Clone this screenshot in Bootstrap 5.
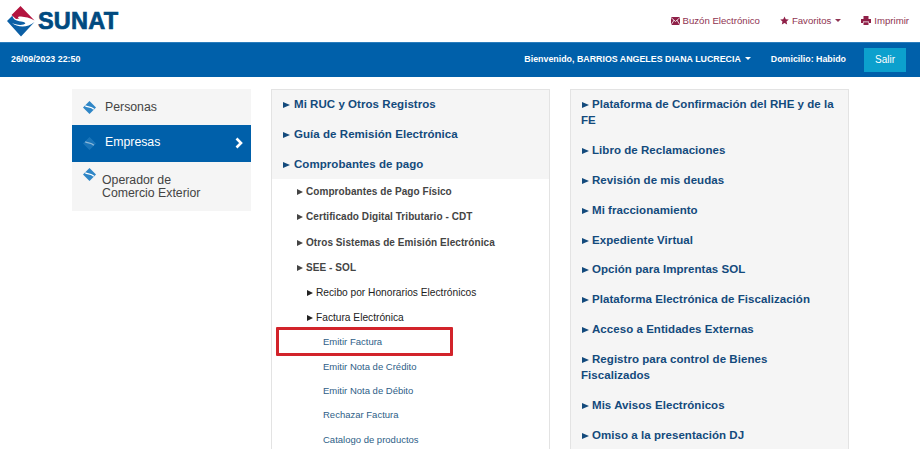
<!doctype html>
<html lang="es">
<head>
<meta charset="utf-8">
<title>SUNAT</title>
<link href="https://cdn.jsdelivr.net/npm/bootstrap@5.3.0/dist/css/bootstrap.min.css" rel="stylesheet">
<style>
html,body{height:461px;overflow:hidden;background:#fff}
body{font-family:"Liberation Sans",Arial,sans-serif;color:#333}
.top-head{height:42px;padding:0 11px 0 7px}
.logo-word{font-weight:700;font-size:23.5px;line-height:1;color:#004a80;-webkit-text-stroke:.7px #004a80;letter-spacing:.2px;margin-left:3px;margin-top:2px}
.top-link{font-size:9.6px;color:#8f3452;text-decoration:none;margin-left:20px;line-height:1}
.top-link svg{vertical-align:-1px;margin-right:3px}
.caret-dn{display:inline-block;width:0;height:0;border-left:3px solid transparent;border-right:3px solid transparent;border-top:3px solid currentColor;vertical-align:2px;margin-left:4px}
.info-bar{height:35px;background:#0060aa;border-top:1px solid #2a7dbd;color:#fff;font-weight:700;font-size:8.85px;padding:0 14px 0 11px}
.domi{margin-left:20px}
.btn-exit{background:#0ca0cd;color:#fff;font-size:10px;width:42px;height:24px;padding:0;border:0;border-radius:0;line-height:24px;margin-left:18px;font-weight:400}
.btn-exit:hover{background:#0ca0cd;color:#fff}
.main-clip{height:372px;overflow:hidden;padding-top:12px}
.main-cols{display:flex;padding-left:72px;gap:20px;align-items:flex-start}
.side-col{width:179px;background:#f5f5f5;font-size:12.3px;color:#444}
.side-row{height:36px;padding-left:11px;gap:5px}
.side-row.row-active{height:37px;background:#0060aa;color:#fff;padding-right:7px}
.side-row.row-active .side-txt{margin-top:-2px}
.side-chev{margin-top:-2px}
.side-row.row-tall{height:49px;align-items:flex-start}
.side-row.row-tall .side-txt{line-height:13px;margin-left:1px;margin-top:12px}
.side-row.row-tall svg{margin-top:6px}
.menu-col{width:279px;height:420px;border:1px solid #e3e3e3;background:#fff}
.menu-col.col-grey{background:#f5f5f5}
.tree-head{font-weight:700;font-size:11.5px;line-height:16px;color:#134a7c;letter-spacing:.05px}
.grey-band{background:#f5f5f5;padding:6px 11px 7px 11px}
.grey-band .tree-head{padding:0 0 14px 0}
.grey-band .tree-head:last-child{padding-bottom:0}
.col-grey .tree-head{padding:0 10px 13.9px 10px}
.col-grey .tree-head:first-child{padding-top:6px}
.tri{display:inline-block;width:0;height:0;border-top:3.5px solid transparent;border-bottom:3.5px solid transparent;border-left:7px solid currentColor;margin-right:4px;vertical-align:0}
.col-grey .tri{margin-left:1px;margin-right:3px}
.tree-sub{font-weight:700;font-size:10px;line-height:14px;color:#444;padding:0 0 11.3px 25px;letter-spacing:.07px}
.tree-sub .tri,.tree-leaf .tri{border-left-width:6px;margin-right:3px}
.tree-leaf{font-size:10.2px;line-height:14px;color:#222;padding:0 0 11px 35px}
.tree-link{display:block;font-size:9.5px;line-height:14px;color:#2e6087;padding:0 0 10.35px 51px;text-decoration:none;position:relative}
.first-link{margin-top:-1px}
.sub-list{padding-top:6px}
.mark-box{position:absolute;left:4px;top:-8px;width:177px;height:29px;border:3px solid #d2232a;border-radius:1px}
</style>
</head>
<body>
<svg width="0" height="0" class="position-absolute">
<symbol id="dia" viewBox="0 0 30 30">
<path d="M15 0 30 15 15 30 0 15Z" fill="#2f86c6"/>
<path d="M5 11C11 15 18 12 25 19" fill="none" stroke="#fff" stroke-width="3.2"/>
</symbol>
</svg>
<header class="top-head d-flex align-items-center">
<svg width="28" height="31" viewBox="0 0 28 31" class="flex-shrink-0"><path d="M13.500 0 27.500 14.500C23 11.500 18 11 14 10.500 11 10 10 11.500 12.500 12.500L9 13 4.500 9Z" fill="#b3143f"/><path d="M0 15 5.500 9.500C5.500 13 9 15 14 15.500 18 16 20 17.500 16.500 18.500 13 19.500 8 18.500 5 17 10 21 20 22.500 27.500 16L14 30.500Z" fill="#0b5fa5"/></svg>
<span class="logo-word">SUNAT</span>
<nav class="ms-auto d-flex align-items-center">
<a class="top-link" href="#"><svg width="9" height="8" viewBox="0 0 9 8"><path d="M0 0h9v8H0z" fill="#8f2048"/><path d="M0 .5 4.500 4.500 9 .5M0 8l3.200-5M9 8 5.800 3" stroke="#fff" stroke-width=".8" fill="none"/></svg>Buzón Electrónico</a>
<a class="top-link" href="#"><svg width="9" height="9" viewBox="0 0 24 24"><path d="M12 1l3.400 7.400 8 .9-6 5.400 1.700 8L12 18.700 4.900 22.700l1.700-8-6-5.400 8-.9z" fill="#8f2048"/></svg>Favoritos<span class="caret-dn"></span></a>
<a class="top-link" href="#"><svg width="10" height="9" viewBox="0 0 10 9"><path d="M2.500 0h5v3h-5zM0 3h10v4H8V5.500H2V7H0zM2.500 6.200h5V9h-5z" fill="#8f2048"/></svg>Imprimir</a>
</nav>
</header>
<div class="info-bar d-flex align-items-center">
<span>26/09/2023 22:50</span>
<span class="ms-auto">Bienvenido, BARRIOS ANGELES DIANA LUCRECIA<span class="caret-dn"></span></span>
<span class="domi">Domicilio: Habido</span>
<button class="btn btn-exit" type="button">Salir</button>
</div>
<main class="main-clip">
<div class="main-cols">
<aside class="side-col flex-shrink-0">
<div class="side-row d-flex align-items-center"><svg width="13" height="13"><use href="#dia"/></svg><span class="side-txt ps-1">Personas</span></div>
<div class="side-row row-active d-flex align-items-center"><svg width="13" height="13" opacity=".55"><use href="#dia"/></svg><span class="side-txt ps-1">Empresas</span><svg class="ms-auto side-chev" width="9" height="12" viewBox="0 0 9 12"><path d="M1.500 1.500 6 6 1.500 10.500" fill="none" stroke="#fff" stroke-width="2.600"/></svg></div>
<div class="side-row row-tall d-flex"><svg width="13" height="13" class="flex-shrink-0"><use href="#dia"/></svg><span class="side-txt">Operador de<br>Comercio Exterior</span></div>
</aside>
<section class="menu-col flex-shrink-0">
<div class="grey-band">
<div class="tree-head"><span class="tri"></span>Mi RUC y Otros Registros</div>
<div class="tree-head"><span class="tri"></span>Guía de Remisión Electrónica</div>
<div class="tree-head"><span class="tri"></span>Comprobantes de pago</div>
</div>
<div class="sub-list">
<div class="tree-sub"><span class="tri"></span>Comprobantes de Pago Físico</div>
<div class="tree-sub"><span class="tri"></span>Certificado Digital Tributario - CDT</div>
<div class="tree-sub"><span class="tri"></span>Otros Sistemas de Emisión Electrónica</div>
<div class="tree-sub"><span class="tri"></span>SEE - SOL</div>
<div class="tree-leaf"><span class="tri"></span>Recibo por Honorarios Electrónicos</div>
<div class="tree-leaf"><span class="tri"></span>Factura Electrónica</div>
<a class="tree-link first-link" href="#">Emitir Factura<span class="mark-box"></span></a>
<a class="tree-link" href="#">Emitir Nota de Crédito</a>
<a class="tree-link" href="#">Emitir Nota de Débito</a>
<a class="tree-link" href="#">Rechazar Factura</a>
<a class="tree-link" href="#">Catalogo de productos</a>
</div>
</section>
<section class="menu-col col-grey flex-shrink-0">
<div class="tree-head"><span class="tri"></span>Plataforma de Confirmación del RHE y de la FE</div>
<div class="tree-head"><span class="tri"></span>Libro de Reclamaciones</div>
<div class="tree-head"><span class="tri"></span>Revisión de mis deudas</div>
<div class="tree-head"><span class="tri"></span>Mi fraccionamiento</div>
<div class="tree-head"><span class="tri"></span>Expediente Virtual</div>
<div class="tree-head"><span class="tri"></span>Opción para Imprentas SOL</div>
<div class="tree-head"><span class="tri"></span>Plataforma Electrónica de Fiscalización</div>
<div class="tree-head"><span class="tri"></span>Acceso a Entidades Externas</div>
<div class="tree-head"><span class="tri"></span>Registro para control de Bienes Fiscalizados</div>
<div class="tree-head"><span class="tri"></span>Mis Avisos Electrónicos</div>
<div class="tree-head"><span class="tri"></span>Omiso a la presentación DJ</div>
</section>
</div>
</main>
</body>
</html>
